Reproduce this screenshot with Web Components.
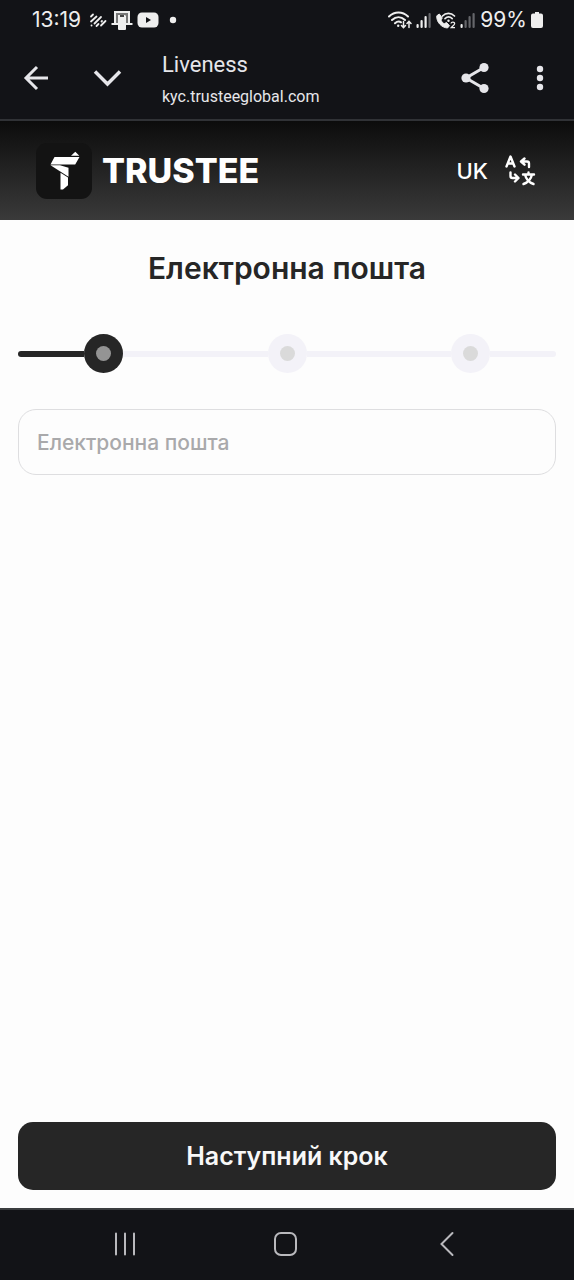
<!DOCTYPE html>
<html lang="uk">
<head>
<meta charset="utf-8">
<meta name="viewport" content="width=device-width, initial-scale=1">
<title>Liveness</title>
<style>
  body { margin: 0; font-family: Inter, "Liberation Sans", sans-serif; background: #fdfdfd; }
</style>
</head>
<body>
<kyc-screen>
  <status-bar slot="top"></status-bar>
  <browser-bar slot="top">
    <span slot="title">Liveness</span>
    <span slot="address">kyc.trusteeglobal.com</span>
  </browser-bar>
  <site-header slot="top" lang-code="UK">TRUSTEE</site-header>
  <span slot="heading">Електронна пошта</span>
  <step-progress steps="3" current="1"></step-progress>
  <text-field label="Електронна пошта"></text-field>
  <primary-button slot="action">Наступний крок</primary-button>
  <system-nav slot="bottom"></system-nav>
</kyc-screen>

<script>
const define = (name, render) => customElements.define(name, class extends HTMLElement {
  connectedCallback() {
    if (this.shadowRoot) return;
    const t = document.createElement('template');
    t.innerHTML = '<style>:host,*{box-sizing:border-box}svg{display:block;flex:none}button{font:inherit;color:inherit;background:none;border:0;padding:0;margin:0;cursor:pointer}</style>' + render(this);
    this.attachShadow({ mode: 'open' }).append(t.content.cloneNode(true));
  }
});

define('kyc-screen', () => `
  <style>
    :host { display: flex; flex-direction: column; min-height: 100vh; background: #fdfdfd; }
    main { flex: 1; display: flex; flex-direction: column; padding: 30px 18px 18px; }
    h1 { margin: 0 0 48px; font-size: 30px; line-height: 36px; font-weight: 600; text-align: center; color: #262626; }
    .fields { display: flex; flex-direction: column; gap: 36px; }
    .action { margin-top: auto; }
  </style>
  <slot name="top"></slot>
  <main>
    <h1><slot name="heading"></slot></h1>
    <div class="fields"><slot></slot></div>
    <div class="action"><slot name="action"></slot></div>
  </main>
  <slot name="bottom"></slot>`);

const signal = (lit) => `
  <svg width="16" height="18" viewBox="0 0 16 18">
    ${[[0, 13], [4, 9], [8, 5], [12, 2]].map(([x, y], i) =>
      `<rect x="${x + .5}" y="${y}" width="2.2" height="${17 - y}" rx="1" fill="${i < lit ? '#eee' : '#65666a'}"/>`).join('')}
  </svg>`;

define('status-bar', () => `
  <style>
    :host { display: flex; align-items: center; justify-content: space-between; height: 40px;
            padding: 0 31px 0 32px; background: #121317; color: #eee; font: 400 21px/24px Inter, sans-serif; }
    div { display: flex; align-items: center; gap: 4px; }
    .time { margin-right: 4px; }
    .dot { margin-left: 6px; }
  </style>
  <div>
    <span class="time">13:19</span>
    <svg width="18" height="16" viewBox="0 0 18 16" fill="none" stroke="#eee" stroke-width="1.8" stroke-linecap="round">
      <path d="M2 4.500 4 2.500M2 9.500 7.500 4.500M2.500 13.500h.1M5.500 11.500 12 5M7.500 14 9.500 12M12.500 9.500 13 9M12 13.500 16.500 9"/>
    </svg>
    <svg width="22" height="20" viewBox="0 0 22 20">
      <path d="M3 1h16v12h2.500v2H15V4.500H8V15H.5v-2H3z" fill="#eee"/>
      <path d="M5 3h12v10h-2V5H7v8H5z" fill="#777"/>
      <rect x="7" y="5" width="8" height="15" rx="1" fill="#eee"/>
      <path d="M9 5h4v2H9z" fill="#444"/>
    </svg>
    <svg width="22" height="16" viewBox="0 0 22 16">
      <rect x=".5" y=".5" width="21" height="15" rx="4.500" fill="#eee"/><path d="m9 5 5 3-5 3z" fill="#121317"/>
    </svg>
    <svg class="dot" width="8" height="8" viewBox="0 0 8 8"><circle cx="4" cy="4" r="3.200" fill="#eee"/></svg>
  </div>
  <div>
    <svg width="24" height="18" viewBox="0 0 24 18" fill="none" stroke="#eee" stroke-linecap="round">
      <path d="M1 5.500C6.500.2 14.500.2 20 5.500M4 9c4-3.700 9-3.700 13 0M7 12.300c2-1.800 4.200-2.200 6-1" stroke-width="2"/>
      <circle cx="10.200" cy="14.700" r="1.200" fill="#eee" stroke="none"/>
      <path d="M15.500 10.500v6m-2-2 2 2.200 2-2.200M21 16.500v-6m-2 2 2-2.200 2 2.200" stroke-width="1.500"/>
    </svg>
    ${signal(3)}
    <svg width="20" height="18" viewBox="0 0 20 18">
      <path d="M3.300 3 .8 4.800C.2 11 5.500 16.600 11.500 17l2-2.300-3-3.200-2.300 1.300C6.500 11.700 5.500 10.500 4.900 9L6.300 7z" fill="#eee" stroke="#eee" stroke-linejoin="round"/>
      <path d="M6.500 5c3.300-3.600 8.500-3.600 12 0M9 7.600c2.200-2 5-2 7.200 0" fill="none" stroke="#eee" stroke-width="1.700" stroke-linecap="round"/>
      <circle cx="12.500" cy="9.700" r="1.200" fill="#eee"/>
      <path d="M15 12.500c.3-1.900 3.800-1.800 3.600.2-.1 1.300-2.300 2.400-3.400 3.900h3.800" fill="none" stroke="#eee" stroke-width="1.300"/>
    </svg>
    ${signal(1)}
    <span>99%</span>
    <svg width="12" height="18" viewBox="0 0 12 18"><path d="M4 1h4v1.500h2Q12 2.500 12 4.500V15q0 2-2 2H2q-2 0-2-2V4.500q0-2 2-2h2z" fill="#eee"/></svg>
  </div>`);

define('browser-bar', () => `
  <style>
    :host { display: flex; align-items: center; height: 81px; padding: 0 18px 4px 20px;
            border-bottom: 2px solid #303236; background: #121317; color: #e6e6ea; }
    .close { margin: 0 38px; }
    .page { flex: 1; min-width: 0; display: flex; flex-direction: column; gap: 6px; padding-top: 4px; }
    .title { font: 400 22px/28px Roboto, sans-serif; }
    .address { font: 400 16px/24px Roboto, sans-serif; }
    .more { margin-left: 32px; }
  </style>
  <button aria-label="Назад"><svg width="32" height="32" viewBox="0 0 32 32" fill="none" stroke="#e6e6ea" stroke-width="3"><path d="M28 16H6M17 5 6 16l11 11"/></svg></button>
  <button class="close" aria-label="Згорнути"><svg width="34" height="32" viewBox="0 0 34 32" fill="none" stroke="#e6e6ea" stroke-width="3.500"><path d="m5 9.500 12.500 12.500L30 9.500"/></svg></button>
  <div class="page">
    <div class="title"><slot name="title"></slot></div>
    <div class="address"><slot name="address"></slot></div>
  </div>
  <button aria-label="Поділитися"><svg width="32" height="32" viewBox="0 0 32 32" fill="#e6e6ea"><path d="M24 5.500 6 16l18 10.500" fill="none" stroke="#e6e6ea" stroke-width="3"/><circle cx="24" cy="5.500" r="4.600"/><circle cx="6" cy="16" r="4.600"/><circle cx="24" cy="26.500" r="4.600"/></svg></button>
  <button class="more" aria-label="Меню"><svg width="32" height="32" viewBox="0 0 32 32" fill="#e6e6ea"><circle cx="16" cy="7" r="3.200"/><circle cx="16" cy="16" r="3.200"/><circle cx="16" cy="25" r="3.200"/></svg></button>`);

define('site-header', (el) => `
  <style>
    :host { display: flex; align-items: center; justify-content: space-between; height: 99px;
            padding: 0 36px; background: linear-gradient(#0c0c0c, #3a3a3a); color: #fff; }
    .brand { display: flex; align-items: center; gap: 10px; color: inherit; text-decoration: none;
             font-size: 34px; line-height: 40px; font-weight: 800; }
    .lang { display: flex; align-items: center; gap: 16px; font-size: 22px; line-height: 28px; font-weight: 500; }
  </style>
  <a class="brand" href="#">
    <svg width="56" height="56" viewBox="0 0 56 56">
      <rect width="56" height="56" rx="11" fill="#131313"/>
      <g fill="#fff"><path d="m35 12.700 4.300-4 4 4zM18.500 14h25l-4.300 7.500H14.500z"/><path d="M14.500 22.300H24l8.500 2.500v8.900z"/><path d="m24.500 29.800 7.500 4.700v7.700l-5 4.300h-2.500z"/></g>
    </svg>
    <slot></slot>
  </a>
  <button class="lang" aria-label="Мова">${el.getAttribute('lang-code')}
    <svg width="34" height="34" viewBox="0 0 34 34" fill="none" stroke="#fff" stroke-width="2.400" stroke-linecap="round" stroke-linejoin="round">
      <path d="M2.500 12.500 6.500 2.500l4 10M4 9.500h5M20.500 4.500 17 7.500l3.500 3.200M17.500 7.500H23q2 0 2 2V13M6.500 18.500V22q0 2 2 2h5.500M11 20.500l3.500 3.500-3.500 3.500M19 20.500h11M24.500 18.500v2M28 20.500c-1 4.500-4 8-8.500 9.500M21 20.500c1 4.500 4 8 8.500 9.500"/>
    </svg>
  </button>`);

define('step-progress', (el) => {
  const n = +el.getAttribute('steps'), cur = +el.getAttribute('current');
  let parts = '';
  for (let i = 1; i <= n; i++) {
    const on = i <= cur ? ' on' : '';
    parts += `<span class="bar${i === 1 ? ' end first' : ''}${on}"></span><span class="dot${on}"></span>`;
  }
  return `
  <style>
    :host { display: flex; align-items: center; }
    .bar { flex: 1; height: 6px; background: #f3f2f8; }
    .end { flex: none; width: 66px; }
    .first { border-radius: 3px 0 0 3px; }
    .last { border-radius: 0 3px 3px 0; }
    .dot { display: grid; place-items: center; flex: none; width: 39px; height: 39px; border-radius: 50%; background: #f3f2f8; }
    .dot::before { content: ""; width: 15px; height: 15px; border-radius: 50%; background: #dadada; }
    .on { background: #262626; }
    .on::before { background: #949494; }
  </style>${parts}<span class="bar end last"></span>`;
});

define('text-field', (el) => `
  <style>
    :host { display: block; }
    input { display: block; width: 100%; height: 66px; padding: 0 18px; border: 1px solid #dedee0; border-radius: 18px;
            background: #fdfdfd; color: #262626; font: 500 21px/28px Inter, sans-serif; outline: 0; }
    input::placeholder { color: #a9a9ab; opacity: 1; }
  </style>
  <input type="email" aria-label="${el.getAttribute('label')}" placeholder="${el.getAttribute('label')}">`);

define('primary-button', () => `
  <style>
    :host { display: block; }
    button { width: 100%; height: 68px; border-radius: 15px; background: #262626; color: #f8f8f8;
             font-size: 25px; line-height: 28px; font-weight: 600; }
  </style>
  <button type="button"><slot></slot></button>`);

define('system-nav', () => `
  <style>
    :host { display: flex; align-items: center; justify-content: space-around; height: 72px; padding: 0 44px;
            border-top: 2px solid #3b3d3f; background: #121317; }
    svg { fill: none; stroke: #b9b9bd; stroke-width: 2; stroke-linecap: round; }
  </style>
  <button aria-label="Останні"><svg width="28" height="28" viewBox="0 0 28 28"><path d="M5 2.500v21M14 2.500v21M23 2.500v21"/></svg></button>
  <button aria-label="Головна"><svg width="28" height="28" viewBox="0 0 28 28"><rect x="2" y="2" width="21" height="22" rx="6"/></svg></button>
  <button aria-label="Назад"><svg width="28" height="28" viewBox="0 0 28 28"><path d="M17.500 2 6.500 13l11 11"/></svg></button>`);
</script>
</body>
</html>
